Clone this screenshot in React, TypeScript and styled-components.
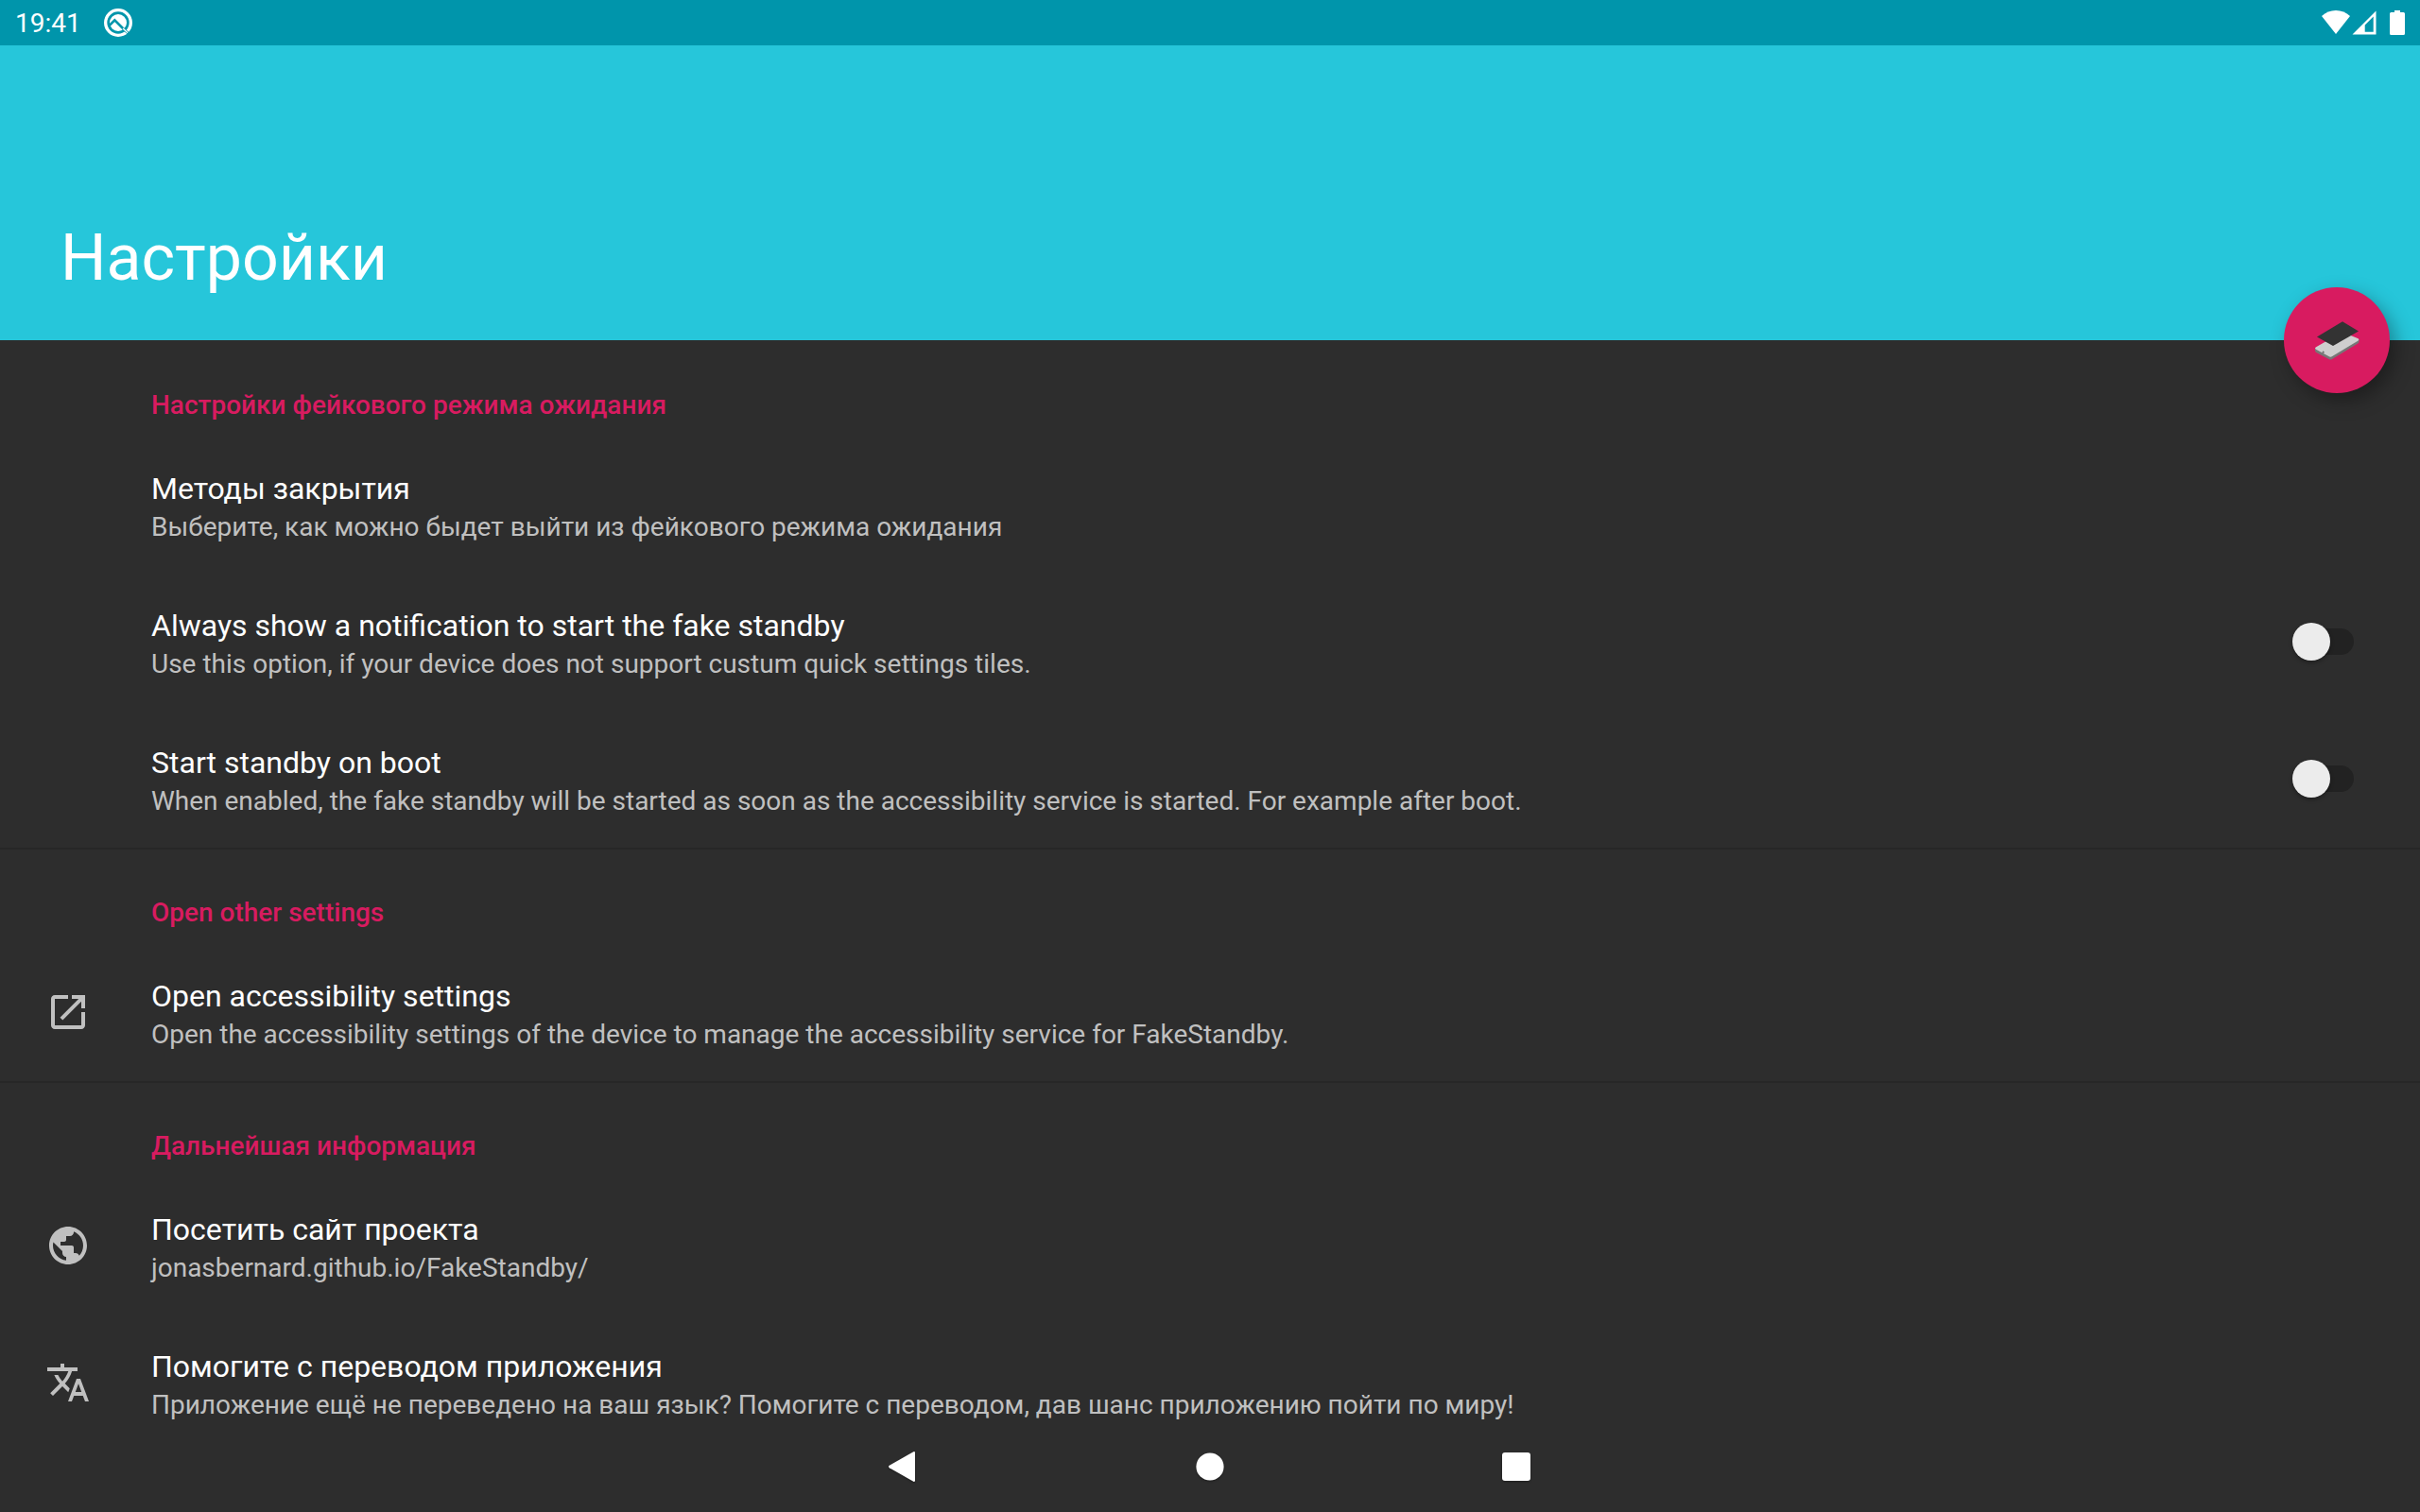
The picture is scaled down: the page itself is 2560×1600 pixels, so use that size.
import React, { useId, useState } from "react";
import styled, { createGlobalStyle } from "styled-components";

const color = {
  statusBar: "#0095ab",
  primary: "#26c6da",
  surface: "#2d2d2d",
  divider: "#272727",
  accent: "#d81b60",
  text: "#ffffff",
  secondary: "#c0c0c0",
  track: "#222222",
  thumb: "#ececec",
};

const GlobalStyle = createGlobalStyle`
  *, *::before, *::after { box-sizing: border-box; }
  body {
    margin: 0;
    background: ${color.surface};
    color: ${color.text};
    font-family: Roboto, "Noto Sans", sans-serif;
  }
  h1, h2, p { margin: 0; font-weight: 400; }
`;

const Screen = styled.div`
  display: flex;
  flex-direction: column;
  min-height: 100vh;
`;

const StatusBar = styled.div`
  display: flex;
  align-items: center;
  justify-content: space-between;
  height: 48px;
  padding: 0 16px;
  background: ${color.statusBar};
`;

const StatusGroup = styled.div<{ $gap: number }>`
  display: flex;
  align-items: center;
  gap: ${(p) => p.$gap}px;
`;

const Clock = styled.time`
  padding-top: 2px;
  font-size: 28px;
  line-height: 40px;
`;

const AppBar = styled.header`
  position: relative;
  display: flex;
  align-items: flex-end;
  height: 312px;
  padding: 0 64px 48px;
  background: ${color.primary};
`;

const Title = styled.h1`
  font-size: 68px;
  line-height: 78px;
`;

const Fab = styled.button`
  position: absolute;
  right: 32px;
  bottom: -56px;
  width: 112px;
  height: 112px;
  padding: 0;
  border: 0;
  border-radius: 50%;
  background: ${color.accent};
  box-shadow: 6px 8px 20px rgba(0, 0, 0, 0.34);
  cursor: pointer;

  svg { display: block; }
`;

const Section = styled.section`
  display: flex;
  flex-direction: column;
`;

const Category = styled.h2<{ $divided: boolean }>`
  padding: 46px 32px 12px 160px;
  border-top: 2px solid ${(p) => (p.$divided ? color.divider : color.surface)};
  color: ${color.accent};
  font-size: 28px;
  line-height: 42px;
  font-weight: 500;
`;

const Row = styled.div`
  display: flex;
  align-items: center;
  width: 100%;
  padding: 0 70px 1px 0;
  border: 0;
  background: transparent;
  color: inherit;
  font: inherit;
  text-align: left;
  text-decoration: none;
  cursor: pointer;
`;

const IconSlot = styled.span`
  display: flex;
  flex: 0 0 160px;
  padding-left: 48px;
  color: ${color.secondary};
`;

const RowText = styled.span`
  display: flex;
  flex: 1;
  flex-direction: column;
  padding: 35px 0 27px;
`;

const RowTitle = styled.span`
  font-size: 32px;
  line-height: 40px;
`;

const RowSummary = styled.span`
  color: ${color.secondary};
  font-size: 28px;
  line-height: 42px;
`;

const Switch = styled.input`
  appearance: none;
  position: relative;
  display: flex;
  align-items: center;
  justify-content: flex-end;
  width: 65px;
  height: 40px;
  margin: 0;
  cursor: pointer;

  &::before {
    content: "";
    width: 60px;
    height: 28px;
    border-radius: 14px;
    background: ${color.track};
  }

  &::after {
    content: "";
    position: absolute;
    left: 0;
    width: 40px;
    height: 40px;
    border-radius: 50%;
    background: ${color.thumb};
    box-shadow: 0 2px 4px rgba(0, 0, 0, 0.35);
  }

  &:checked::after {
    left: 25px;
    background: ${color.accent};
  }
`;

const NavBar = styled.nav`
  position: fixed;
  right: 0;
  bottom: 0;
  left: 0;
  display: flex;
  align-items: center;
  justify-content: center;
  gap: 164px;
  height: 96px;
`;

const NavButton = styled.button`
  display: flex;
  align-items: center;
  justify-content: center;
  width: 160px;
  height: 96px;
  padding: 0;
  border: 0;
  background: transparent;
  color: ${color.text};
  cursor: pointer;

  svg { filter: drop-shadow(0 1px 1px rgba(0, 0, 0, 0.35)); }
`;

const NotificationIcon = () => (
  <svg width="30" height="30" viewBox="0 0 90 90" aria-hidden="true">
    <circle cx="45" cy="45" r="40" fill="none" stroke="#fff" strokeWidth="10" />
    <circle cx="45" cy="45" r="27" fill="#fff" />
    <path d="M15 56 34 37 66 69" fill="none" stroke={color.statusBar} strokeWidth="8" />
    <path d="M66 69 84 85" stroke={color.statusBar} strokeWidth="8" />
    <path d="M60 63 75 77" stroke="#fff" strokeWidth="4" />
  </svg>
);

const WifiIcon = () => (
  <svg width="30" height="26" viewBox="0 0 30 26" aria-hidden="true">
    <path d="M0 6C4 2.200 9.500 0 15 0s11 2.200 15 6L15 25z" fill="#fff" />
  </svg>
);

const SignalIcon = () => (
  <svg width="26" height="26" viewBox="0 0 26 26" aria-hidden="true">
    <path fillRule="evenodd" d="M25.500.500V25.500H.500zM22.700 6.500 13.700 15.500V22.700H22.700z" fill="#fff" />
  </svg>
);

const BatteryIcon = () => (
  <svg width="16" height="26" viewBox="0 0 16 26" aria-hidden="true">
    <path d="M5 0h6v2h3.500A1.500 1.500 0 0 1 16 3.500v21a1.500 1.500 0 0 1-1.500 1.500h-13A1.500 1.500 0 0 1 0 24.500v-21A1.500 1.500 0 0 1 1.500 2H5z" fill="#fff" />
  </svg>
);

const StandbyIcon = () => (
  <svg width="112" height="112" viewBox="0 0 112 112" aria-hidden="true">
    <path d="M33 64.500v2.500q0 1.200 1.200 1.900L47.500 76q1.800 1 3.600 0L78.200 59.500q1.400-.900 1.300-2.300V55z" fill="#777" />
    <path d="M34 63.300 60 48.500q2.500-1 4.500 0l14.100 5.700q1.600 1.100 0 2.200L51.200 73.100q-1.900 1.100-3.800 0L33.600 65.500q-1.400-1.100.4-2.200z" fill="#cfcfcf" />
    <path d="M41 67.800l1.800 1.200M40.500 69l1.500.200" stroke="#555" strokeWidth="1" />
    <path d="M62 36.300 79 46.500 52 62 35 52.500z" fill="#333" />
  </svg>
);

type GlyphProps = { d: string };

const Glyph = ({ d }: GlyphProps) => (
  <svg width="48" height="48" viewBox="0 0 24 24" fill="currentColor" aria-hidden="true">
    <path d={d} />
  </svg>
);

const glyphs = {
  openInNew:
    "M19 19H5V5h7V3H5c-1.110 0-2 .9-2 2v14c0 1.100.890 2 2 2h14c1.100 0 2-.9 2-2v-7h-2v7zM14 3v2h3.590l-9.830 9.830 1.410 1.410L19 6.410V10h2V3h-7z",
  globe:
    "M12 2C6.480 2 2 6.480 2 12s4.480 10 10 10 10-4.480 10-10S17.520 2 12 2zm-1 17.930c-3.950-.490-7-3.850-7-7.930 0-.620.080-1.210.210-1.790L9 15v1c0 1.100.9 2 2 2v1.930zm6.900-2.540c-.260-.810-1-1.390-1.900-1.390h-1v-3c0-.550-.450-1-1-1H8v-2h2c.550 0 1-.450 1-1V7h2c1.100 0 2-.9 2-2v-.410c2.930 1.190 5 4.060 5 7.410 0 2.080-.8 3.970-2.100 5.390z",
  translate:
    "M12.870 15.070l-2.540-2.510.030-.030c1.740-1.940 2.980-4.170 3.710-6.530H17V4h-7V2H8v2H1v1.990h11.170C11.500 7.920 10.440 9.750 9 11.350 8.070 10.320 7.300 9.190 6.690 8h-2c.730 1.630 1.730 3.170 2.980 4.560l-5.090 5.020L4 19l5-5 3.110 3.110.760-2.040zM18.500 10h-2L12 22h2l1.120-3h4.750L21 22h2l-4.500-12zm-2.620 7l1.620-4.330L19.120 17h-3.240z",
};

type RowContent = { title: string; summary: string; icon?: string };

const RowBody = ({ title, summary, icon }: RowContent) => (
  <>
    <IconSlot>{icon && <Glyph d={icon} />}</IconSlot>
    <RowText>
      <RowTitle>{title}</RowTitle>
      <RowSummary>{summary}</RowSummary>
    </RowText>
  </>
);

const ActionRow = (props: RowContent) => (
  <Row as="button">
    <RowBody {...props} />
  </Row>
);

const LinkRow = ({ href, ...content }: RowContent & { href: string }) => (
  <Row as="a" {...{ href }}>
    <RowBody {...content} />
  </Row>
);

const SwitchRow = (props: RowContent) => {
  const id = useId();
  const [on, setOn] = useState(false);
  return (
    <Row as="label" {...{ htmlFor: id }}>
      <RowBody {...props} />
      <Switch id={id} type="checkbox" role="switch" checked={on} onChange={(e) => setOn(e.target.checked)} />
    </Row>
  );
};

export default function App() {
  return (
    <Screen>
      <GlobalStyle />
      <StatusBar>
        <StatusGroup $gap={24}>
          <Clock>19:41</Clock>
          <NotificationIcon />
        </StatusGroup>
        <StatusGroup $gap={14}>
          <StatusGroup $gap={2}>
            <WifiIcon />
            <SignalIcon />
          </StatusGroup>
          <BatteryIcon />
        </StatusGroup>
      </StatusBar>
      <AppBar>
        <Title>Настройки</Title>
        <Fab aria-label="FakeStandby">
          <StandbyIcon />
        </Fab>
      </AppBar>
      <main>
        <Section>
          <Category $divided={false}>Настройки фейкового режима ожидания</Category>
          <ActionRow
            title="Методы закрытия"
            summary="Выберите, как можно быдет выйти из фейкового режима ожидания"
          />
          <SwitchRow
            title="Always show a notification to start the fake standby"
            summary="Use this option, if your device does not support custum quick settings tiles."
          />
          <SwitchRow
            title="Start standby on boot"
            summary="When enabled, the fake standby will be started as soon as the accessibility service is started. For example after boot."
          />
        </Section>
        <Section>
          <Category $divided>Open other settings</Category>
          <ActionRow
            icon={glyphs.openInNew}
            title="Open accessibility settings"
            summary="Open the accessibility settings of the device to manage the accessibility service for FakeStandby."
          />
        </Section>
        <Section>
          <Category $divided>Дальнейшая информация</Category>
          <LinkRow
            href="#site"
            icon={glyphs.globe}
            title="Посетить сайт проекта"
            summary="jonasbernard.github.io/FakeStandby/"
          />
          <LinkRow
            href="#translate"
            icon={glyphs.translate}
            title="Помогите с переводом приложения"
            summary="Приложение ещё не переведено на ваш язык? Помогите с переводом, дав шанс приложению пойти по миру!"
          />
        </Section>
      </main>
      <NavBar>
        <NavButton aria-label="Back">
          <svg width="48" height="48" viewBox="0 0 48 48" fill="currentColor">
            <path d="M34.300 8.300Q36 7.500 36 9.500v29q0 2-1.700 1.200L8.800 25.200q-1.600-1.200 0-2.400z" />
          </svg>
        </NavButton>
        <NavButton aria-label="Home">
          <svg width="48" height="48" viewBox="0 0 48 48" fill="currentColor">
            <circle cx="24" cy="24" r="14.600" />
          </svg>
        </NavButton>
        <NavButton aria-label="Overview">
          <svg width="48" height="48" viewBox="0 0 48 48" fill="currentColor">
            <rect x="9" y="9" width="30" height="30" rx="3" />
          </svg>
        </NavButton>
      </NavBar>
    </Screen>
  );
}
